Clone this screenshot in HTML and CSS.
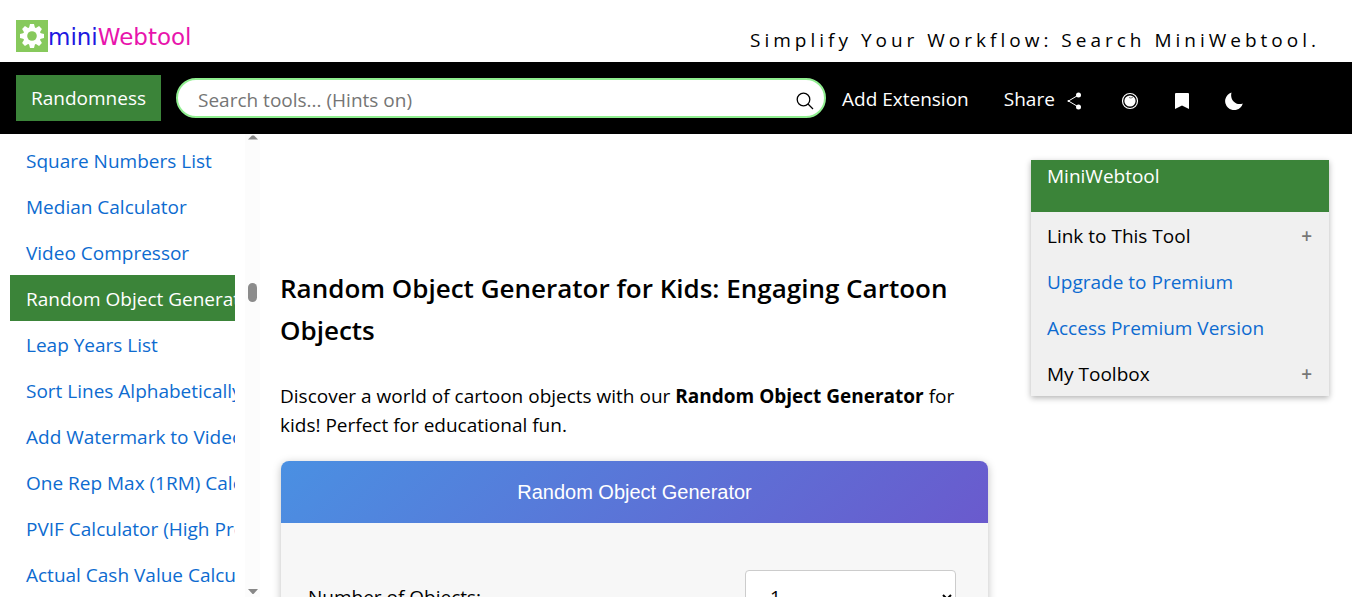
FILE: index.html
```html
<!DOCTYPE html>
<html lang="en">
<head>
  <meta charset="UTF-8" />
  <title>Random Object Generator for Kids</title>
  <meta name="viewport" content="width=device-width, initial-scale=1.0" />
  <link rel="stylesheet" href="styles.css">
</head>
<body>
<header class="top">
  <a class="logo" href="#">
    <svg width="32" height="32" viewBox="0 0 32 32" aria-hidden="true">
      <rect width="32" height="32" fill="#87c95c"/>
      <g fill="#fff">
        <circle cx="16" cy="16" r="9"/>
        <path id="tooth" d="M13 8L14 4h4l1 4v16l-1 4h-4l-1-4z"/>
        <use href="#tooth" transform="rotate(45 16 16)"/>
        <use href="#tooth" transform="rotate(90 16 16)"/>
        <use href="#tooth" transform="rotate(135 16 16)"/>
      </g>
      <circle cx="16" cy="16" r="4.800" fill="#87c95c"/>
    </svg>
    <span class="logo-mini">mini</span><span class="logo-web">Webtool</span>
  </a>
  <div class="slogan">Simplify Your Workflow: Search MiniWebtool.</div>
</header>

<nav class="navbar">
  <a class="category" href="#">Randomness</a>
  <form class="search">
    <input type="text" aria-label="Search tools" placeholder="Search tools... (Hints on)">
    <button type="button" aria-label="Search">
      <svg width="18" height="18" viewBox="0 0 18 18" fill="none" stroke="#000" stroke-width="1.3">
        <circle cx="7.5" cy="7.5" r="6.3"/>
        <path d="M12 12l5 5"/>
      </svg>
    </button>
  </form>
  <a class="extension" href="#">Add Extension</a>
  <a class="share" href="#">Share
    <svg width="16" height="18" viewBox="0 0 16 18" aria-hidden="true">
      <path d="M11.500 3L1.500 9l10 6" fill="none" stroke="#fff" stroke-width="1"/>
      <circle cx="11.500" cy="3" r="2.500" fill="#fff"/>
      <circle cx="11.500" cy="15" r="2.500" fill="#fff"/>
      <circle cx="1.500" cy="9" r="1" fill="#fff"/>
    </svg>
  </a>
  <div class="icons">
    <button type="button" aria-label="Random tool">
      <svg width="18" height="18" viewBox="0 0 18 18">
        <circle cx="9" cy="9" r="7.500" fill="none" stroke="#fff" stroke-width="1.200"/>
        <circle cx="9" cy="9" r="5.600" fill="#fff"/>
        <path d="M8 5.500q2 1.500 4-.5" fill="none" stroke="#666" stroke-width=".9"/>
      </svg>
    </button>
    <button type="button" aria-label="Bookmark">
      <svg width="18" height="18" viewBox="0 0 18 18">
        <path d="M2 2Q2 1 3 1H15Q16 1 16 2V17L9 13.500L2 17z" fill="#fff"/>
      </svg>
    </button>
    <button type="button" aria-label="Dark mode">
      <svg width="18" height="18" viewBox="0 0 18 18">
        <path d="M6.500 .5A9 9 0 1 0 17.800 11.500C11 14 4.500 8 6.500 .5z" fill="#fff"/>
      </svg>
    </button>
  </div>
</nav>

<div class="layout">
  <div class="sidebar">
    <ul class="tools">
      <li><a href="#">Square Numbers List</a></li>
      <li><a href="#">Median Calculator</a></li>
      <li><a href="#">Video Compressor</a></li>
      <li><a class="active" href="#">Random Object Generator</a></li>
      <li><a href="#">Leap Years List</a></li>
      <li><a href="#">Sort Lines Alphabetically</a></li>
      <li><a href="#">Add Watermark to Video</a></li>
      <li><a href="#">One Rep Max (1RM) Calculator</a></li>
      <li><a href="#">PVIF Calculator (High Precision)</a></li>
      <li><a href="#">Actual Cash Value Calculator</a></li>
    </ul>
    <div class="scrollbar" aria-hidden="true">
      <svg width="10" height="5" viewBox="0 0 10 5"><path d="M0 4.500L4 .5h2L10 4.500z" fill="#888"/></svg>
      <div class="thumb"></div>
      <svg width="10" height="5" viewBox="0 0 10 5"><path d="M0 0h10L5.500 5h-1z" fill="#888"/></svg>
    </div>
  </div>

  <main>
    <h1>Random Object Generator for Kids: Engaging Cartoon Objects</h1>
    <p>Discover a world of cartoon objects with our <strong>Random Object Generator</strong> for kids! Perfect for educational fun.</p>
    <section class="generator">
      <h2>Random Object Generator</h2>
      <div class="field">
        <label for="count">Number of Objects:</label>
        <div class="select-box">
          <select id="count">
            <option>1</option>
            <option>2</option>
            <option>3</option>
            <option>4</option>
            <option>5</option>
          </select>
          <svg width="10" height="6" viewBox="0 0 10 6" aria-hidden="true"><path d="M1 1l4 4 4-4" fill="none" stroke="#000" stroke-width="2"/></svg>
        </div>
      </div>
    </section>
  </main>

  <aside class="panel">
    <h3>MiniWebtool</h3>
    <button type="button">Link to This Tool <span>+</span></button>
    <a href="#">Upgrade to Premium</a>
    <a href="#">Access Premium Version</a>
    <button type="button">My Toolbox <span>+</span></button>
  </aside>
</div>
</body>
</html>
```
FILE: styles.css
```css
:root {
  --green: #3b8439;
  --link: #0d6bd0;
}

* {
  box-sizing: border-box;
}

html {
  scrollbar-width: none;
}

body {
  margin: 0;
  font-family: 'Segoe UI', 'Open Sans', sans-serif;
  font-size: 19px;
  line-height: 30px;
  color: #000;
  background: #fff;
}

a {
  color: var(--link);
  text-decoration: none;
}

button {
  padding: 0;
  border: none;
  background: none;
  color: #000;
  font: inherit;
  cursor: pointer;
}

svg {
  display: block;
}

.top {
  display: flex;
  justify-content: space-between;
  height: 62px;
  padding: 20px 32px 0 16px;
}

.logo {
  display: flex;
  height: 32px;
  line-height: 34px;
  font-family: Verdana, 'DejaVu Sans', sans-serif;
  font-size: 23px;
}

.logo-mini {
  color: #2018e0;
}

.logo-web {
  color: #e814ac;
}

.slogan {
  line-height: 40px;
  letter-spacing: 4px;
}

.navbar {
  display: flex;
  align-items: center;
  height: 72px;
  padding: 0 16px;
  background: #000;
}

.navbar a {
  color: #fff;
}

.navbar .category {
  padding: 8px 15px;
  background: var(--green);
}

.search {
  display: flex;
  align-items: center;
  width: 650px;
  height: 40px;
  margin: 0 16px 0 15px;
  padding: 0 10px 0 20px;
  border: 2px solid #90ee90;
  border-radius: 20px;
  background: #fff;
}

.search input {
  flex: 1;
  padding: 4px 0 0;
  border: none;
  outline: none;
  background: none;
  font: inherit;
}

.search input::placeholder {
  color: #757575;
}

.search button {
  padding-top: 6px;
}

.extension,
.share {
  padding-top: 2px;
}

.share {
  display: flex;
  align-items: center;
  gap: 12px;
  margin-left: 35px;
}

.icons {
  display: flex;
  gap: 34px;
  margin-left: 38px;
}

.share svg {
  margin-top: 4px;
}

.icons svg {
  margin-top: 6px;
}

.layout {
  display: flex;
  align-items: flex-start;
}

.sidebar {
  display: flex;
  justify-content: space-between;
  flex: none;
  width: 260px;
  height: calc(100vh - 134px);
  padding-left: 10px;
  overflow: hidden;
}

.tools {
  width: 225px;
  margin: 0;
  padding: 3px 0 0;
  list-style: none;
}

.tools a {
  display: block;
  padding: 9px 0 7px 16px;
  overflow: hidden;
  white-space: nowrap;
}

.tools .active {
  background: var(--green);
  color: #fff;
}

.scrollbar {
  display: flex;
  flex-direction: column;
  align-items: center;
  width: 15px;
  padding: 1px 0 3px;
  background: #fcfcfc;
}

.scrollbar svg:last-child {
  margin-top: auto;
}

.thumb {
  width: 9px;
  height: 19px;
  margin-top: 143px;
  border-radius: 5px;
  background: #8b8b8b;
}

main {
  flex: 1;
  min-width: 0;
  padding: 133px 43px 0 20px;
}

h1 {
  margin: 0 0 31px;
  font-size: 26px;
  font-weight: 600;
  line-height: 42px;
}

p {
  margin: 0 0 21px;
  line-height: 29px;
}

.generator {
  margin-left: 1px;
  border-radius: 8px;
  background: #f7f7f7;
  box-shadow: 0 2px 8px rgba(0,0,0,0.25);
}

.generator h2 {
  margin: 0;
  padding: 16px;
  border-radius: 8px 8px 0 0;
  background: linear-gradient(135deg, #4a90e2, #6a5acd);
  color: #fff;
  font-family: Arial, 'Liberation Sans', sans-serif;
  font-size: 20px;
  font-weight: normal;
  text-align: center;
}

.field {
  display: flex;
  justify-content: space-between;
  align-items: center;
  padding: 47px 32px 40px 27px;
}

.select-box {
  position: relative;
  width: 211px;
}

.select-box select {
  appearance: none;
  width: 100%;
  height: 54px;
  padding: 0 24px;
  border: 1px solid #ccc;
  border-radius: 4px;
  background: #fff;
  color: #000;
  font: inherit;
}

.select-box svg {
  position: absolute;
  right: 4px;
  top: 24px;
}

.panel {
  flex: none;
  width: 298px;
  margin: 26px 23px 0 0;
  background: #f0f0f0;
  box-shadow: 0 2px 6px rgba(0,0,0,0.3);
}

.panel h3 {
  height: 52px;
  margin: 0;
  padding: 1px 16px;
  background: var(--green);
  color: #fff;
  font-size: 19px;
  font-weight: normal;
}

.panel a,
.panel button {
  display: flex;
  justify-content: space-between;
  width: 100%;
  padding: 9px 17px 7px 16px;
}

.panel span {
  color: #777;
  font-weight: 600;
}
```
